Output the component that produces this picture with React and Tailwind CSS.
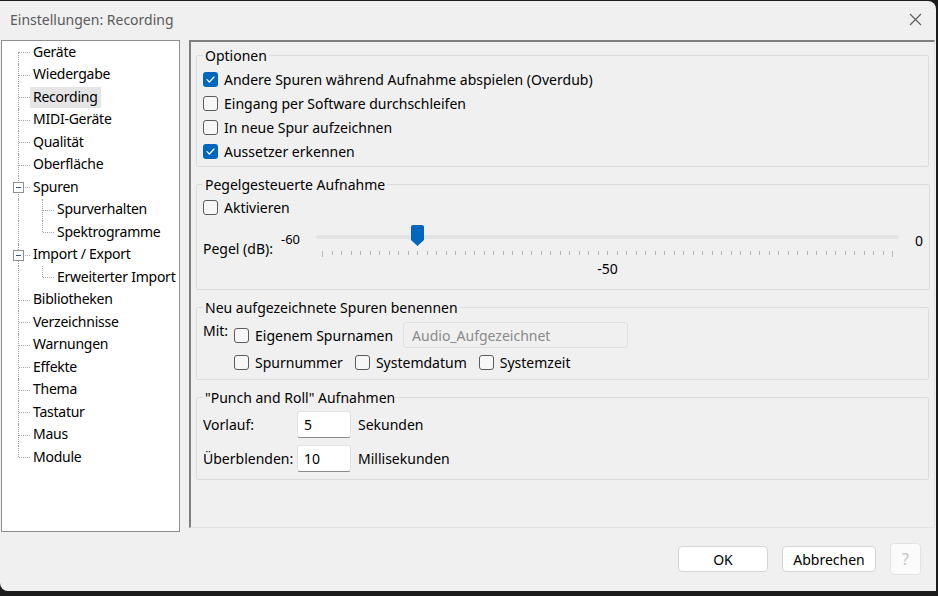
import { useState } from 'react'

const font = { fontFamily: '"Noto Sans", "Open Sans", sans-serif' }

const tree = [
  { label: 'Geräte', first: true },
  { label: 'Wiedergabe' },
  { label: 'Recording', selected: true },
  { label: 'MIDI-Geräte' },
  { label: 'Qualität' },
  { label: 'Oberfläche' },
  { label: 'Spuren', expand: true },
  { label: 'Spurverhalten', child: true },
  { label: 'Spektrogramme', child: true, childLast: true },
  { label: 'Import / Export', expand: true },
  { label: 'Erweiterter Import', child: true, childLast: true },
  { label: 'Bibliotheken' },
  { label: 'Verzeichnisse' },
  { label: 'Warnungen' },
  { label: 'Effekte' },
  { label: 'Thema' },
  { label: 'Tastatur' },
  { label: 'Maus' },
  { label: 'Module', last: true },
]

function TreeRow({ item }) {
  return (
    <div className="relative h-[22.5px] flex items-center">
      {/* connector lines */}
      <span
        className={`absolute left-[16px] border-l border-dotted border-[#a0a0a0] ${item.first ? 'top-1/2' : 'top-0'} ${item.last ? 'bottom-1/2' : 'bottom-0'}`}
      />
      {!item.child && (
        <span className="absolute left-[17px] top-1/2 w-[11px] border-t border-dotted border-[#a0a0a0]" />
      )}
      {item.child && (
        <>
          <span className={`absolute left-[40px] top-0 border-l border-dotted border-[#a0a0a0] ${item.childLast ? 'bottom-1/2' : 'bottom-0'}`} />
          <span className="absolute left-[41px] top-1/2 w-[11px] border-t border-dotted border-[#a0a0a0]" />
        </>
      )}
      {item.expand && (
        <span className="absolute left-[11px] top-[6px] w-[11px] h-[11px] bg-white border border-[#919191] flex items-center justify-center">
          <span className="w-[5px] h-px bg-[#3c4f78]" />
        </span>
      )}
      <span
        className={`${item.child ? 'ml-[52px]' : 'ml-[28px]'} px-[3px] pb-[1px] leading-[20px] whitespace-nowrap tracking-[-0.25px] text-[14px] text-black ${item.selected ? 'bg-[#e5e5e5]' : ''}`}
      >
        {item.label}
      </span>
    </div>
  )
}

function Check({ checked, label, className = '' }) {
  return (
    <label className={`flex items-center gap-[6px] text-[14px] text-black whitespace-nowrap ${className}`}>
      <span
        className={`w-[15px] h-[15px] rounded-[3px] flex items-center justify-center ${checked ? 'bg-[#0067c0]' : 'bg-[#f7f7f7] border border-[#5c5c5c]'}`}
      >
        {checked && (
          <svg width="9" height="7" viewBox="0 0 9 7" fill="none">
            <path d="M1 3.6 3.4 6 8 1" stroke="white" strokeWidth="1.2" strokeLinecap="round" strokeLinejoin="round" />
          </svg>
        )}
      </span>
      <span>{label}</span>
    </label>
  )
}

function Group({ title, children, className = '' }) {
  return (
    <fieldset className={`border border-[#dcdcdc] rounded-[2px] px-[6px] ${className}`}>
      <legend className="px-[2px] text-[14px] leading-[17px] text-black">{title}</legend>
      {children}
    </fieldset>
  )
}

function Field({ value }) {
  return (
    <div className="w-[54px] h-[27px] bg-white border border-[#e3e3e3] border-b-[#8a8a8a] rounded-[3px] flex items-center pl-[6px] text-[14px] text-black">
      {value}
    </div>
  )
}

export default function App() {
  const [opts] = useState({ overdub: true, dropouts: true })
  const ticks = Array.from({ length: 61 })

  return (
    <div className="w-[938px] h-[596px] bg-[#1c1c1c] overflow-hidden" style={font}>
      <div className="w-[936px] h-[590px] mt-px bg-[#f0f0f0] rounded-tr-[8px] rounded-bl-[8px] flex flex-col">
        {/* title bar */}
        <div className="h-[39px] flex items-center justify-between pl-[10px] pr-[14px] pb-[2px]">
          <span className="text-[14px] text-[#5a5a5a]">Einstellungen: Recording</span>
          <svg width="13" height="13" viewBox="0 0 13 13">
            <path d="M1 1 12 12M12 1 1 12" stroke="#5a5a5a" strokeWidth="1.1" />
          </svg>
        </div>

        <div className="flex items-start">
          {/* tree */}
          <div className="ml-px w-[179px] h-[492px] bg-white border border-[#8f8f8f]">
            {tree.map(item => (
              <TreeRow key={item.label} item={item} />
            ))}
          </div>

          {/* page */}
          <div className="ml-[9px] w-[746px] h-[488px] border-l-2 border-t-2 border-[#7f7f7f] border-r border-r-[#e3e3e3] border-b border-b-[#e3e3e3] px-[5px] pt-[5px] flex flex-col gap-[9px]">
            <Group title="Optionen" className="pb-[3px]">
              <div className="pt-[3px] flex flex-col">
                <div className="h-[24px] flex items-center">
                  <Check
                    checked={opts.overdub}
                    label="Andere Spuren während Aufnahme abspielen (Overdub)"
                  />
                </div>
                <div className="h-[24px] flex items-center">
                  <Check label="Eingang per Software durchschleifen" />
                </div>
                <div className="h-[24px] flex items-center">
                  <Check label="In neue Spur aufzeichnen" />
                </div>
                <div className="h-[24px] flex items-center">
                  <Check checked={opts.dropouts} label="Aussetzer erkennen" />
                </div>
              </div>
            </Group>

            <Group title="Pegelgesteuerte Aufnahme">
              <div className="pt-[2px] h-[26px] flex items-center">
                <Check label="Aktivieren" />
              </div>
              <div className="h-[70px] flex items-start text-[14px] text-black">
                <span className="mt-[21px] leading-[17px] w-[70px]">Pegel (dB):</span>
                <span className="ml-[8px] mt-[12px] leading-[17px] text-[13px]">-60</span>
                <div className="relative ml-[16px] w-[583px] h-full">
                  <div className="mt-[16px] h-[4px] bg-[#e3e3e3] rounded-full" />
                  <div className="mt-[12px] px-[6px] flex justify-between items-start">
                    {ticks.map((_, i) => (
                      <span
                        key={i}
                        className={`w-px bg-[#b4b4b4] ${i === 0 || i === 60 ? 'h-[6px]' : 'h-[4px]'}`}
                      />
                    ))}
                  </div>
                  <div className="mt-[3px] text-center leading-[17px]">-50</div>
                  <svg
                    width="13"
                    height="21"
                    viewBox="0 0 13 21"
                    className="absolute left-[95px] top-[6px]"
                  >
                    <path d="M2 0h9a2 2 0 0 1 2 2v13l-6.5 6L0 15V2a2 2 0 0 1 2-2z" fill="#0067c0" />
                  </svg>
                </div>
                <span className="ml-[16px] mt-[13px] leading-[17px]">0</span>
              </div>
            </Group>

            <Group title="Neu aufgezeichnete Spuren benennen" className="pb-[2px]">
              <div className="mt-[6px] h-[26px] flex items-center text-[14px] text-black">
                <span className="self-start -mt-[2px] w-[31px]">Mit:</span>
                <Check label="Eigenem Spurnamen" />
                <div className="ml-[10px] w-[225px] h-[26px] bg-[#f0f0f0] border border-[#e0e0e0] rounded-[3px] flex items-center pl-[8px] text-[#8a8a8a]">
                  Audio_Aufgezeichnet
                </div>
              </div>
              <div className="h-[29px] pl-[31px] flex items-center gap-[12px]">
                <Check label="Spurnummer" />
                <Check label="Systemdatum" />
                <Check label="Systemzeit" />
              </div>
            </Group>

            <Group title={'"Punch and Roll" Aufnahmen'} className="pb-[7px]">
              <div className="mt-[5px] flex items-center text-[14px] text-black">
                <span className="w-[94px]">Vorlauf:</span>
                <Field value="5" />
                <span className="ml-[7px]">Sekunden</span>
              </div>
              <div className="mt-[7px] flex items-center text-[14px] text-black">
                <span className="w-[94px]">Überblenden:</span>
                <Field value="10" />
                <span className="ml-[7px]">Millisekunden</span>
              </div>
            </Group>
          </div>
        </div>

        {/* buttons */}
        <div className="mt-[11px] flex items-center justify-end pr-[15px] gap-[14px] text-[14px] text-black">
          <button className="w-[90px] h-[26px] bg-white border border-[#d4d4d4] rounded-[4px]">OK</button>
          <button className="w-[94px] h-[26px] bg-white border border-[#d4d4d4] rounded-[4px]">Abbrechen</button>
          <button className="w-[31px] h-[32px] bg-[#fbfbfb] border border-[#e3e3e3] rounded-[4px] text-[#c2c2c2] text-[16px]">?</button>
        </div>
      </div>
    </div>
  )
}
